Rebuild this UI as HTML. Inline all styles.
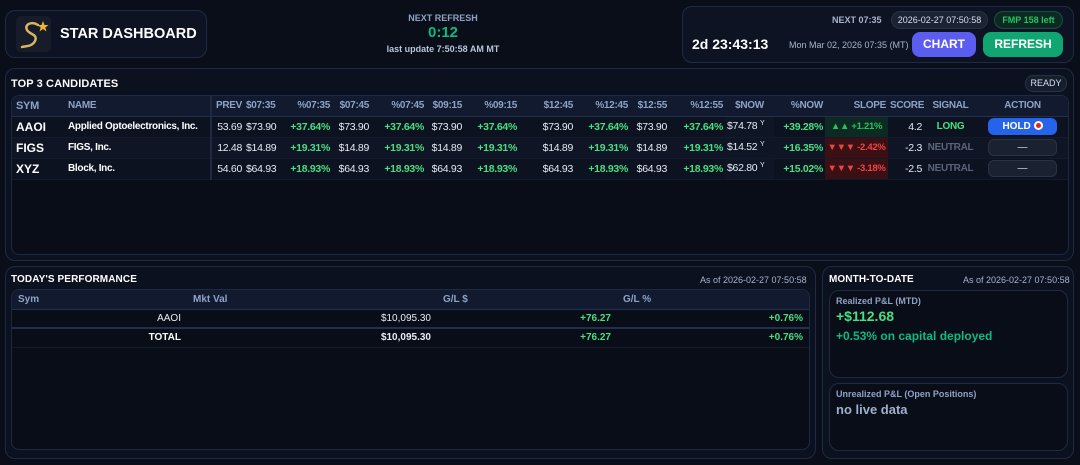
<!DOCTYPE html>
<html><head><meta charset="utf-8">
<style>
*{box-sizing:border-box;margin:0;padding:0}
body{width:1080px;height:465px;background:#0a0e19;font-family:"Liberation Sans",Arial,sans-serif;color:#e6ebf5;position:relative;overflow:hidden}
.abs{position:absolute}
.panel{position:absolute;border:1px solid #1f2b45;border-radius:10px;background:#0b111e}
.box{position:absolute;border:1px solid #1e2a44;border-radius:8px;background:#090d18}
.g{color:#4ade80;font-weight:bold}
.ttl{font-weight:bold;font-size:11px;color:#fff;letter-spacing:.1px}
table{border-collapse:collapse;table-layout:fixed}
#t td,#t th{height:21px;font-size:10.5px;letter-spacing:-0.3px;white-space:nowrap;padding:0 2px;text-align:right;vertical-align:middle;line-height:12px;overflow:visible}
#t th{color:#8ea2c6;font-weight:bold;background:#111a2e;height:20px;border-bottom:1px solid #22304d;font-size:10px}
#t td{border-bottom:1px solid #121a2b}
#t tr.r1 td{background:#0c1220}#t tr.r2 td{background:#0f1524}#t tr.r3 td{background:#0c1220}
#t .l{text-align:left;padding-left:4px}
#t .sep{border-right:2px solid #1e2a44}
#t td.sym{font-weight:bold;font-size:12px;color:#fff;letter-spacing:0}
#t td.nm{font-weight:bold;font-size:10px;color:#fff}
#t td.now{background:#0e1626!important}
#t td.up{background:#0d2a22!important;color:#22c55e;font-weight:bold;font-size:9.5px;text-align:center}
#t td.dn{background:#3a1014!important;color:#ef4444;font-weight:bold;font-size:9.5px;text-align:center}
.y{font-size:7px;position:relative;top:-4px}
.btn{display:inline-block;border-radius:6px;font-weight:bold;font-size:10px;text-align:center;letter-spacing:0}
#p td,#p th{font-size:10px;height:19px;padding:0 6px}
#p th{color:#8ea2c6;background:#111a2e;text-align:left;border-bottom:1px solid #22304d}
</style></head><body>

<div class="abs" style="left:5px;top:10px;width:202px;height:48px;border:1px solid #1f2b45;border-radius:10px;background:#0d1322"></div>
<div class="abs" style="left:16px;top:16px;width:35px;height:36px;border-radius:5px;background:#161c29">
<svg width="35" height="36" viewBox="0 0 35 36"><path d="M22 9 C16 5 8 8 11 14 C14 19 22 18 19 25 C16 31 9 30 6 31" stroke="#d9b560" stroke-width="2.5" fill="none" stroke-linecap="round"/><polygon points="27,5 28.5,9 32.5,9 29.3,11.5 30.5,15.5 27,13 23.5,15.5 24.7,11.5 21.5,9 25.5,9" fill="#f2b632"/></svg></div>
<div class="abs" style="left:60px;top:26px;font-weight:bold;font-size:14.5px;color:#fff">STAR DASHBOARD</div>

<div class="abs" style="left:343px;top:13px;width:200px;text-align:center;font-weight:bold;font-size:9px;color:#8ea2c6">NEXT REFRESH</div>
<div class="abs" style="left:343px;top:24px;width:200px;text-align:center;font-weight:bold;font-size:15px;color:#10b981">0:12</div>
<div class="abs" style="left:343px;top:44px;width:200px;text-align:center;font-weight:bold;font-size:9px;color:#b8c4dc">last update 7:50:58 AM MT</div>

<div class="abs" style="left:682px;top:6px;width:392px;height:57px;border:1px solid #1f2b45;border-radius:10px;background:#0d1322"></div>
<div class="abs" style="left:832px;top:15px;font-size:9px;font-weight:bold;color:#a8b4cc">NEXT 07:35</div>
<div class="abs" style="left:891px;top:11px;width:97px;height:18px;border-radius:9px;background:#1a2233;border:1px solid #273248;font-size:9px;color:#d8dfec;text-align:center;line-height:16px">2026-02-27 07:50:58</div>
<div class="abs" style="left:994px;top:11px;width:69px;height:18px;border-radius:9px;background:#0c2a22;border:1px solid #14523f;font-size:9px;font-weight:bold;color:#22c55e;text-align:center;line-height:16px">FMP 158 left</div>
<div class="abs" style="left:692px;top:36px;font-weight:bold;font-size:14px;color:#fff">2d 23:43:13</div>
<div class="abs" style="left:789px;top:40px;font-size:9px;color:#a8b4cc">Mon Mar 02, 2026 07:35 (MT)</div>
<div class="abs btn" style="left:912px;top:32px;width:64px;height:25px;line-height:25px;background:#5b5cf0;color:#fff;font-size:12px;border-radius:8px">CHART</div>
<div class="abs btn" style="left:983px;top:32px;width:80px;height:25px;line-height:25px;background:#10a672;color:#fff;font-size:12px;border-radius:8px">REFRESH</div>

<div class="panel" style="left:5px;top:68px;width:1069px;height:193px"></div>
<div class="abs ttl" style="left:11px;top:78px">TOP 3 CANDIDATES</div>
<div class="abs" style="left:1025px;top:75px;width:42px;height:17px;border-radius:8px;background:#161e2e;border:1px solid #273248;font-size:9px;color:#d8dfec;text-align:center;line-height:15px">READY</div>
<div class="box" style="left:11px;top:95px;width:1058px;height:160px;overflow:hidden">
<table id="t" style="width:1056px">
<colgroup><col style="width:52px"><col style="width:147px"><col style="width:33px"><col style="width:33px"><col style="width:55px"><col style="width:39px"><col style="width:55px"><col style="width:38px"><col style="width:55px"><col style="width:56px"><col style="width:55px"><col style="width:39px"><col style="width:56px"><col style="width:49px"><col style="width:51px"><col style="width:63px"><col style="width:36px"><col style="width:53px"><col style="width:91px"></colgroup>
<tr><th class="l" style="font-size:11px">SYM</th><th class="l sep">NAME</th><th>PREV</th><th>$07:35</th><th>%07:35</th><th>$07:45</th><th>%07:45</th><th>$09:15</th><th>%09:15</th><th>$12:45</th><th>%12:45</th><th>$12:55</th><th>%12:55</th><th style="text-align:center">$NOW</th><th>%NOW</th><th>SLOPE</th><th>SCORE</th><th style="text-align:center">SIGNAL</th><th style="text-align:center">ACTION</th></tr>
<tr class="r1"><td class="l sym">AAOI</td><td class="l nm sep">Applied Optoelectronics, Inc.</td><td>53.69</td><td>$73.90</td><td class="g">+37.64%</td><td>$73.90</td><td class="g">+37.64%</td><td>$73.90</td><td class="g">+37.64%</td><td>$73.90</td><td class="g">+37.64%</td><td>$73.90</td><td class="g">+37.64%</td><td class="now" style="text-align:left">$74.78 <span class="y">Y</span></td><td class="g">+39.28%</td><td class="up">▲▲ +1.21%</td><td>4.2</td><td style="text-align:center;color:#4ade80;font-weight:bold;font-size:10px">LONG</td><td style="text-align:center"><span class="btn" style="width:69px;height:17px;line-height:17px;background:#2563eb;color:#fff">HOLD <span style="display:inline-block;width:9px;height:9px;border-radius:50%;background:#fff;vertical-align:-1px;position:relative"><span style="position:absolute;left:2px;top:2px;width:5px;height:5px;border-radius:50%;background:#dc2626"></span></span></span></td></tr>
<tr class="r2"><td class="l sym">FIGS</td><td class="l nm sep">FIGS, Inc.</td><td>12.48</td><td>$14.89</td><td class="g">+19.31%</td><td>$14.89</td><td class="g">+19.31%</td><td>$14.89</td><td class="g">+19.31%</td><td>$14.89</td><td class="g">+19.31%</td><td>$14.89</td><td class="g">+19.31%</td><td class="now" style="text-align:left">$14.52 <span class="y">Y</span></td><td class="g">+16.35%</td><td class="dn">▼▼▼ -2.42%</td><td>-2.3</td><td style="text-align:center;color:#5b6478;font-weight:bold;font-size:10px">NEUTRAL</td><td style="text-align:center"><span class="btn" style="width:69px;height:17px;line-height:15px;background:#1a2130;border:1px solid #2a3346;color:#9aa3b5">—</span></td></tr>
<tr class="r3"><td class="l sym">XYZ</td><td class="l nm sep">Block, Inc.</td><td>54.60</td><td>$64.93</td><td class="g">+18.93%</td><td>$64.93</td><td class="g">+18.93%</td><td>$64.93</td><td class="g">+18.93%</td><td>$64.93</td><td class="g">+18.93%</td><td>$64.93</td><td class="g">+18.93%</td><td class="now" style="text-align:left">$62.80 <span class="y">Y</span></td><td class="g">+15.02%</td><td class="dn">▼▼▼ -3.18%</td><td>-2.5</td><td style="text-align:center;color:#5b6478;font-weight:bold;font-size:10px">NEUTRAL</td><td style="text-align:center"><span class="btn" style="width:69px;height:17px;line-height:15px;background:#1a2130;border:1px solid #2a3346;color:#9aa3b5">—</span></td></tr>
</table></div>

<div class="panel" style="left:5px;top:266px;width:811px;height:193px"></div>
<div class="abs ttl" style="left:11px;top:274px;font-size:10px">TODAY'S PERFORMANCE</div>
<div class="abs" style="left:700px;top:275px;font-size:9px;color:#a8b4cc">As of 2026-02-27 07:50:58</div>
<div class="box" style="left:11px;top:289px;width:799px;height:161px;overflow:hidden">
<table id="p" style="width:797px">
<colgroup><col style="width:175px"><col style="width:250px"><col style="width:180px"><col style="width:192px"></colgroup>
<tr><th style="height:16px">Sym</th><th>Mkt Val</th><th>G/L $</th><th>G/L %</th></tr>
<tr><td style="text-align:right;color:#e6ebf5">AAOI</td><td style="text-align:right">$10,095.30</td><td class="g" style="text-align:right">+76.27</td><td class="g" style="text-align:right">+0.76%</td></tr>
<tr style="border-top:2px solid #22304d"><td style="text-align:right;font-weight:bold;color:#fff">TOTAL</td><td style="text-align:right;font-weight:bold">$10,095.30</td><td class="g" style="text-align:right">+76.27</td><td class="g" style="text-align:right">+0.76%</td></tr>
<tr><td colspan="4" style="border-top:1px solid #121a2b;height:1px;padding:0"></td></tr>
</table></div>

<div class="panel" style="left:822px;top:266px;width:252px;height:193px"></div>
<div class="abs ttl" style="left:829px;top:274px;font-size:10px">MONTH-TO-DATE</div>
<div class="abs" style="left:963px;top:275px;font-size:9px;color:#a8b4cc">As of 2026-02-27 07:50:58</div>
<div class="box" style="left:829px;top:290px;width:239px;height:88px;border-radius:10px"></div>
<div class="abs" style="left:836px;top:296px;font-size:9px;font-weight:bold;color:#8ea2c6">Realized P&amp;L (MTD)</div>
<div class="abs" style="left:836px;top:308px;font-size:14px;font-weight:bold;color:#4ade80">+$112.68</div>
<div class="abs" style="left:836px;top:329px;font-size:12px;font-weight:bold;color:#10b981">+0.53% on capital deployed</div>
<div class="box" style="left:829px;top:383px;width:239px;height:68px;border-radius:10px"></div>
<div class="abs" style="left:836px;top:389px;font-size:9px;font-weight:bold;color:#8ea2c6">Unrealized P&amp;L (Open Positions)</div>
<div class="abs" style="left:836px;top:402px;font-size:13px;font-weight:bold;color:#9fb0cc">no live data</div>
</body></html>
